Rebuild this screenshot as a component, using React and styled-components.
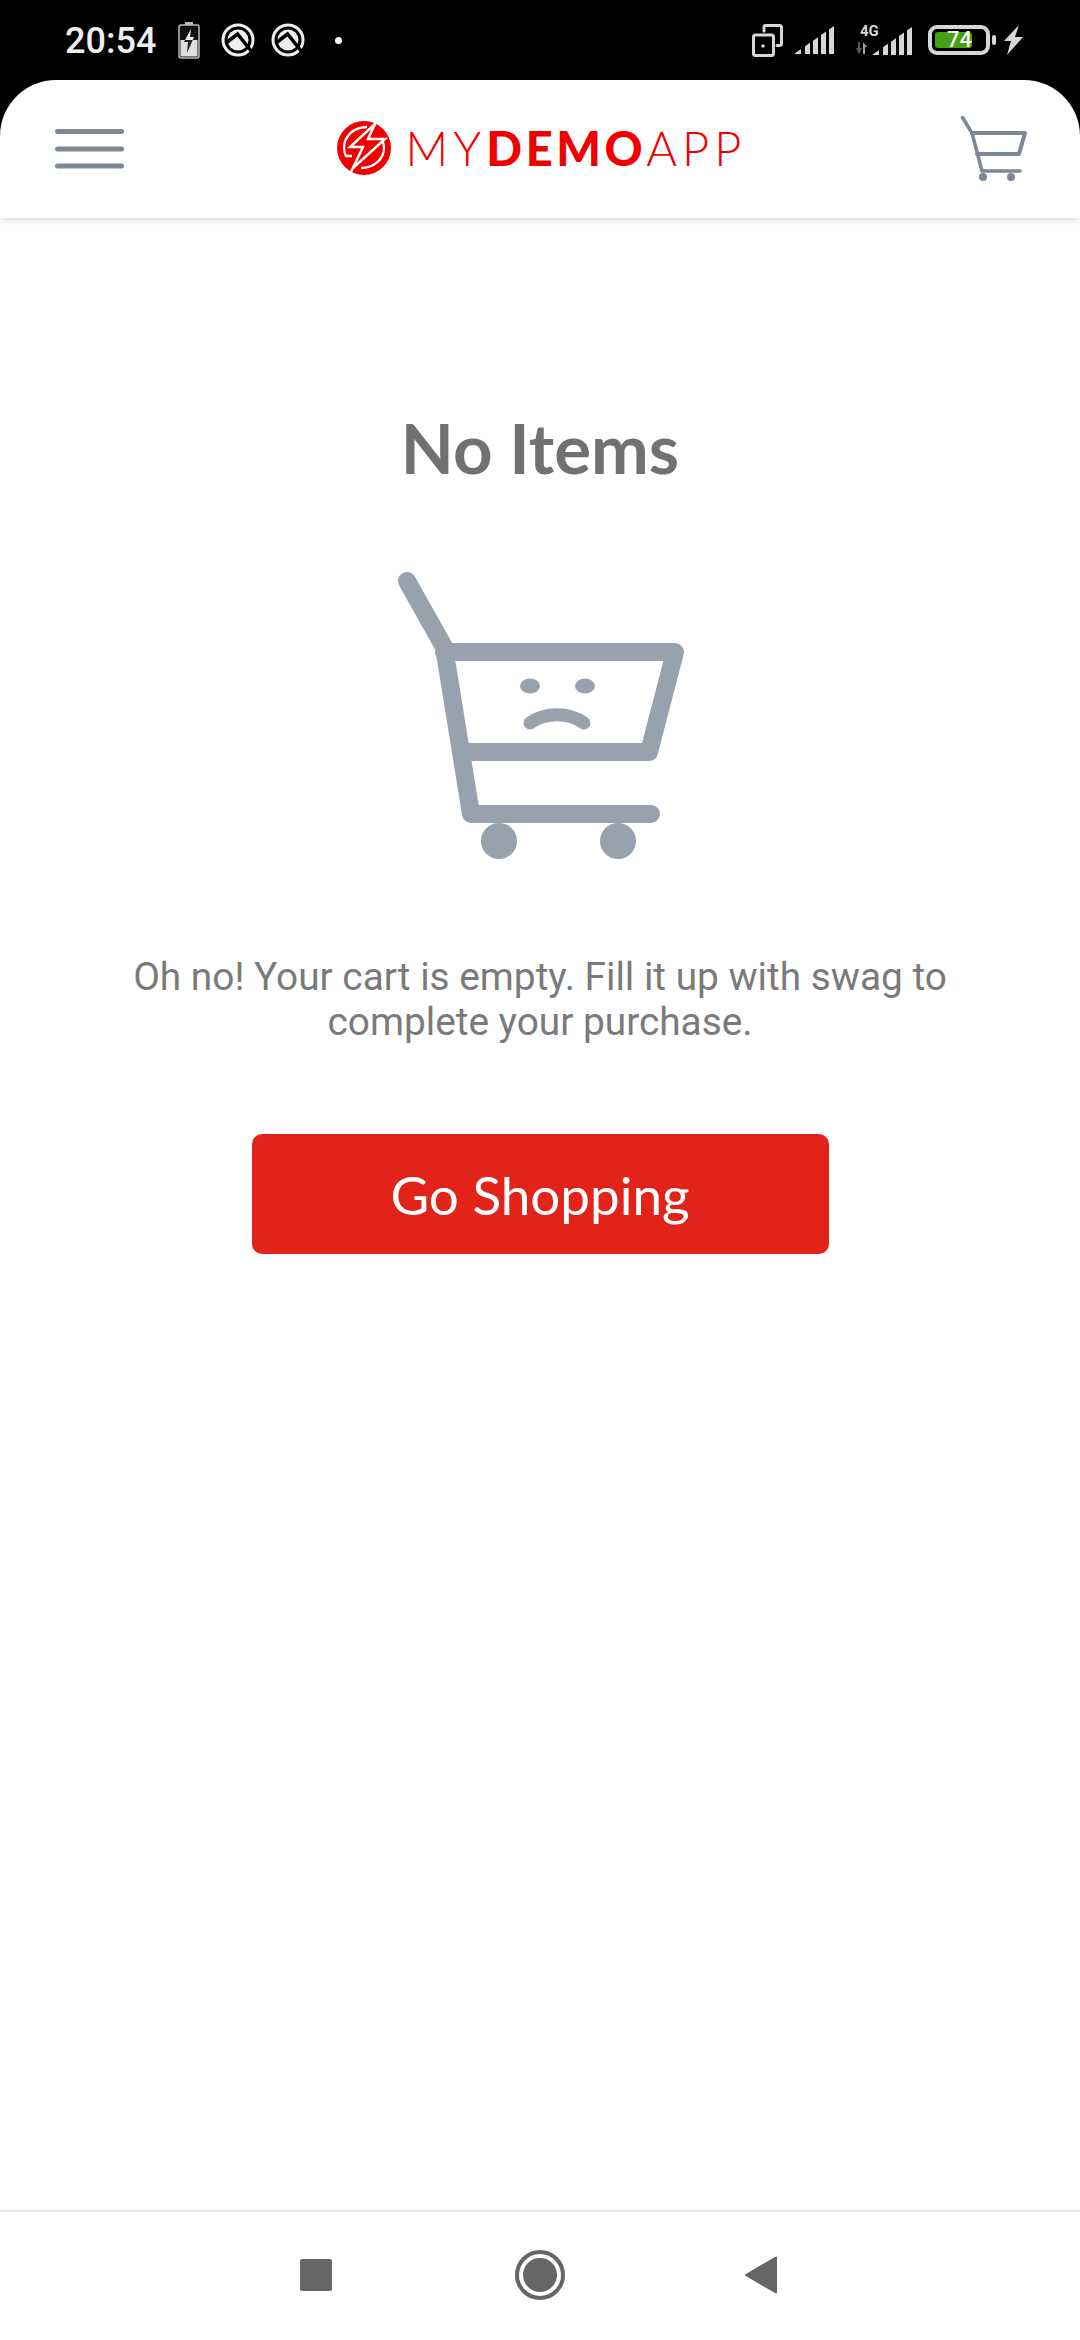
import React from "react";
import styled, { createGlobalStyle } from "styled-components";

const GlobalStyle = createGlobalStyle`
  html, body {
    margin: 0;
    padding: 0;
    background: #ffffff;
  }
  * {
    box-sizing: border-box;
  }
`;

const Screen = styled.div`
  width: 1080px;
  height: 2340px;
  display: flex;
  flex-direction: column;
  background: #ffffff;
  overflow: hidden;
`;

const Top = styled.div`
  background: #000000;
  position: relative;
  z-index: 1;
`;

const StatusBar = styled.div`
  height: 80px;
  display: flex;
  align-items: center;
  justify-content: space-between;
  padding: 0 56px 0 65px;
  color: #eeeeee;
`;

const StatusGroup = styled.div`
  display: flex;
  align-items: center;
  gap: 16px;
`;

const Time = styled.span`
  font-family: Roboto, sans-serif;
  font-weight: 500;
  font-size: 36px;
  line-height: 36px;
  margin-right: 6px;
  margin-top: 2px;
`;

const Dot = styled.div`
  width: 7px;
  height: 7px;
  margin-left: 14px;
  border-radius: 50%;
  background: #ffffff;
`;

const Slot = styled.div`
  display: flex;
  margin-left: ${(p) => p.$left || 0}px;
  margin-bottom: ${(p) => p.$lift || 0}px;
`;

const Header = styled.header`
  height: 138px;
  background: #ffffff;
  border-radius: 56px 56px 0 0;
  box-shadow: 0 2px 6px rgba(0, 0, 0, 0.14);
  display: flex;
  align-items: center;
  justify-content: space-between;
  padding: 0 52px 0 55px;
`;

const Logo = styled.div`
  display: flex;
  align-items: center;
  gap: 15px;
  margin-right: 2px;
  margin-top: -3px;
`;

const LogoText = styled.span`
  font-family: Lato, sans-serif;
  font-weight: 300;
  font-size: 47px;
  line-height: 54px;
  letter-spacing: 5px;
  color: #f00000;
  b {
    font-weight: 900;
    letter-spacing: 3.6px;
  }
`;

const Main = styled.main`
  flex: 1;
  display: flex;
  flex-direction: column;
  align-items: center;
  padding-top: 192px;
`;

const Title = styled.h1`
  margin: 0;
  font-family: Lato, sans-serif;
  font-weight: 700;
  font-size: 69px;
  line-height: 76px;
  color: #717171;
`;

const SadCart = styled.svg`
  display: block;
  margin: 74px 0 0 0;
  transform: translateX(1px);
`;

const Message = styled.p`
  margin: 74px 0 0;
  width: 860px;
  font-family: Roboto, sans-serif;
  font-size: 38.8px;
  line-height: 45px;
  text-align: center;
  color: #7a7a7a;
`;

const ShopButton = styled.button`
  margin-top: 90px;
  width: 577px;
  height: 120px;
  border: 0;
  border-radius: 10px;
  background: #e2231a;
  color: #ffffff;
  font-family: Lato, sans-serif;
  font-size: 53px;
`;

const NavBar = styled.nav`
  height: 130px;
  border-top: 2px solid #e8e8e8;
  display: flex;
  align-items: center;
  justify-content: center;
  gap: 183px;
  padding: 0 3px 2px 0;
`;

const NavSquare = styled.div`
  width: 32px;
  height: 32px;
  border-radius: 2px;
  background: #666666;
`;

const NavHome = styled.div`
  width: 50px;
  height: 50px;
  border-radius: 50%;
  border: 4px solid #666666;
  padding: 4px;
  &::after {
    content: "";
    display: block;
    width: 100%;
    height: 100%;
    border-radius: 50%;
    background: #666666;
  }
`;

const BatteryBox = styled.div`
  position: relative;
  width: 62px;
  height: 30px;
  border: 4px solid #d6d6d6;
  border-radius: 9px;
  margin-right: 6px;
  &::after {
    content: "";
    position: absolute;
    left: 60px;
    top: 6px;
    width: 4px;
    height: 10px;
    border-radius: 2px;
    background: #d6d6d6;
  }
`;

const BatteryFill = styled.div`
  width: 37px;
  height: 16px;
  margin: 3px 0 0 3px;
  border-radius: 3px;
  background: #46a010;
`;

const BatteryLabel = styled.span`
  position: absolute;
  left: 15px;
  top: -2px;
  font-family: Roboto, sans-serif;
  font-weight: 500;
  font-size: 22px;
  line-height: 26px;
  color: #f2f2f2;
`;

const Battery = () => (
  <BatteryBox>
    <BatteryFill />
    <BatteryLabel>74</BatteryLabel>
  </BatteryBox>
);

const BatteryMini = () => (
  <svg width="22" height="37" viewBox="0 0 22 37">
    <path d="M7 0h8v3H7z" fill="#bbbbbb" />
    <rect x="1" y="3" width="20" height="33" rx="2" fill="#111111" stroke="#bbbbbb" strokeWidth="1.500" />
    <rect x="2.500" y="18" width="17" height="16.500" fill="#dedede" />
    <path d="M13 7 7 18h7.700L16 15h-4z" fill="#eeeeee" />
    <path d="M7 18l-1 2h4l-1 11 5.700-13z" fill="#222222" />
  </svg>
);

const BlockedCircle = () => (
  <svg width="34" height="34" viewBox="0 0 34 34">
    <circle cx="17" cy="17" r="15" fill="none" stroke="#eeeeee" strokeWidth="3" />
    <circle cx="17" cy="17" r="10.500" fill="#eeeeee" />
    <path d="M5 20 16.500 11 31 29" fill="none" stroke="#000000" strokeWidth="3.500" />
  </svg>
);

const RotateIcon = () => (
  <svg width="31" height="33" viewBox="0 0 31 33" fill="none" stroke="#d6d6d6" strokeWidth="3" strokeLinejoin="round">
    <path d="M12 7V3a1.500 1.500 0 0 1 1.500-1.500H28A1.500 1.500 0 0 1 29.500 3v17a1.500 1.500 0 0 1-1.500 1.500h-3" strokeLinecap="round" />
    <rect x="1.500" y="11" width="20" height="20.500" rx="2" />
    <circle cx="11" cy="22" r="1.800" fill="#d6d6d6" stroke="none" />
  </svg>
);

const signalBars = "M0 28l7-5v5zM11 28v-7.700l5-3.500V28zM19 28V14.700l5-3.500V28zM27 28V9.100l5-3.500V28zM35 28V3.500L40 0v28z";

const Signal = () => (
  <svg width="40" height="28" viewBox="0 0 40 28">
    <path d={signalBars} fill="#d6d6d6" />
  </svg>
);

const Network = () => (
  <svg width="57" height="33" viewBox="0 0 57 33">
    <text x="5" y="14" fontFamily="Roboto, sans-serif" fontWeight="700" fontSize="15" fill="#d6d6d6">4G</text>
    <path d="M1 26h2v-6h2v6h2l-3 6z" fill="#5a5a5a" />
    <path d="M8 20l4 5h-2v7H8z" fill="#a0a0a0" />
    <g transform="translate(17 5)">
      <path d={signalBars} fill="#d6d6d6" />
    </g>
  </svg>
);

const Bolt = () => (
  <svg width="20" height="30" viewBox="0 0 20 30">
    <path d="M15 0 0 16h7L3 30l16-18h-8z" fill="#d6d6d6" />
  </svg>
);

const Hamburger = () => (
  <svg width="70" height="46" viewBox="0 0 70 46" fill="#7c8797">
    <rect x="0" y="3" width="69" height="5" rx="2.500" />
    <rect x="0" y="20.500" width="69" height="5" rx="2.500" />
    <rect x="0" y="37.500" width="69" height="5" rx="2.500" />
  </svg>
);

const LogoMark = () => (
  <svg width="54" height="54" viewBox="0 0 54 54" fill="none" stroke="#ffffff" strokeWidth="2.300">
    <circle cx="27" cy="27" r="27" fill="#f00000" stroke="none" />
    <path d="M40 0 38 3 13 26H26L13 53" strokeWidth="2.500" />
    <path d="M38 3 31 18H48L16 47" strokeWidth="2.500" />
    <path d="M30 6C16 6 7 16 7 27c0 3 .8 5.500 2 8h6" />
    <path d="M24 47c13 0 23-9 23-20 0-3-.5-5-1.500-7" />
  </svg>
);

const SmallCart = () => (
  <svg width="68" height="68" viewBox="0 0 68 68" fill="none" stroke="#7c8797" strokeLinecap="round" strokeLinejoin="round">
    <path d="M2.500 2.500 12 18l10 38h38" strokeWidth="3.500" />
    <path d="M12 18h53l-6 21H17" strokeWidth="4" />
    <circle cx="23" cy="62" r="4" fill="#7c8797" stroke="none" />
    <circle cx="51" cy="62" r="4" fill="#7c8797" stroke="none" />
  </svg>
);

export default function App() {
  return (
    <Screen>
      <GlobalStyle />
      <Top>
        <StatusBar>
          <StatusGroup>
            <Time>20:54</Time>
            <Slot>
              <BatteryMini />
            </Slot>
            <Slot $left={5}>
              <BlockedCircle />
            </Slot>
            <BlockedCircle />
            <Dot />
          </StatusGroup>
          <StatusGroup>
            <RotateIcon />
            <Slot $left={-5}>
              <Signal />
            </Slot>
            <Slot $left={5} $lift={4}>
              <Network />
            </Slot>
            <Battery />
            <Slot $left={-8}>
              <Bolt />
            </Slot>
          </StatusGroup>
        </StatusBar>
        <Header>
          <Hamburger />
          <Logo>
            <LogoMark />
            <LogoText>
              MY<b>DEMO</b>APP
            </LogoText>
          </Logo>
          <SmallCart />
        </Header>
      </Top>
      <Main>
        <Title>No Items</Title>
        <SadCart width="320" height="320" viewBox="0 0 320 320">
          <g fill="none" stroke="#98a1ae" strokeWidth="18" strokeLinecap="round" strokeLinejoin="round">
            <path d="M26 21 63 87l27 167h180" />
            <path d="M63 92h231l-26 100H80" />
            <path d="M149 163c15-11 39-11 54 0" strokeWidth="13" />
          </g>
          <g fill="#98a1ae">
            <ellipse cx="149" cy="126" rx="10" ry="7.500" />
            <ellipse cx="204" cy="126" rx="10" ry="7.500" />
            <circle cx="118" cy="281" r="18" />
            <circle cx="237" cy="281" r="18" />
          </g>
        </SadCart>
        <Message>Oh no! Your cart is empty. Fill it up with swag to complete your purchase.</Message>
        <ShopButton>Go Shopping</ShopButton>
      </Main>
      <NavBar>
        <NavSquare />
        <NavHome />
        <Slot $left={-3}>
          <svg width="32" height="38" viewBox="0 0 32 38">
            <path d="M31 1.500v35L1 19z" fill="#666666" stroke="#666666" strokeWidth="2" strokeLinejoin="round" />
          </svg>
        </Slot>
      </NavBar>
    </Screen>
  );
}
